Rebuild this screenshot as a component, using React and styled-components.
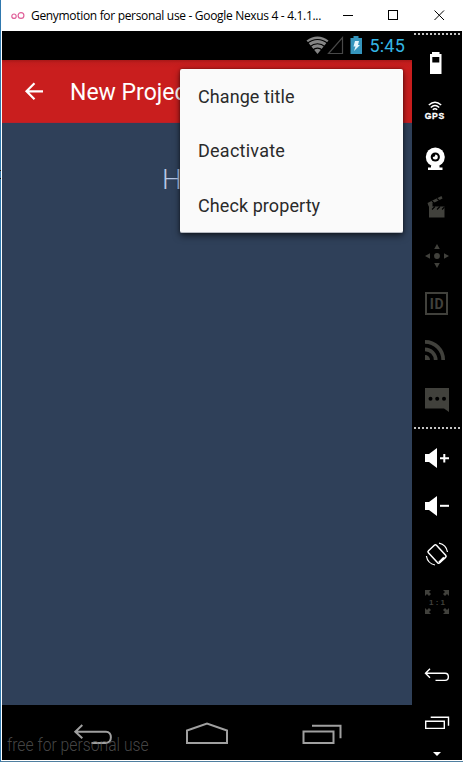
import React from "react";
import styled, { createGlobalStyle } from "styled-components";

const Global = createGlobalStyle`
  *, *::before, *::after { box-sizing: border-box; }
  body { margin: 0; background: #fff; overflow: hidden; }
  svg { display: block; flex: none; }
`;

const Window = styled.div`
  width: 463px;
  height: 762px;
  display: flex;
  flex-direction: column;
  background: #fff;
  border-left: 1px solid #2f78ae;
  border-bottom: 1px solid #4f7fa0;
  padding: 0 1px 1px 1px;
  position: relative;
`;

const EdgeMark = styled.i`
  position: absolute;
  left: -1px;
  top: ${(p) => p.$y}px;
  width: 1px;
  height: 1px;
  background: #111;
`;

const TitleBar = styled.header`
  height: 31px;
  flex: none;
  display: flex;
  align-items: center;
  padding-left: 9px;
`;

const WindowTitle = styled.span`
  font: 12px/16px "Open Sans", "Noto Sans", sans-serif;
  letter-spacing: -0.32px;
  color: #000;
  white-space: nowrap;
  width: 312px;
  margin-left: 6px;
`;

const Body = styled.div`
  display: flex;
  flex: 1;
  min-height: 0;
`;

const Phone = styled.main`
  width: 410px;
  display: flex;
  flex-direction: column;
  position: relative;
  background: #000;
  font-family: Roboto, sans-serif;
`;

const StatusBar = styled.div`
  height: 29px;
  display: flex;
  align-items: center;
  justify-content: flex-end;
  padding-right: 7px;
`;

const Clock = styled.span`
  font-size: 18px;
  line-height: 29px;
  color: #33b5e5;
  margin-left: 6px;
  letter-spacing: 0.2px;
`;

const AppBar = styled.div`
  height: 63px;
  display: flex;
  align-items: center;
  background: linear-gradient(#a81818 0, #c21d1d 3px, #c91e1e 8px);
  border-bottom: 1px solid #b9202a;
`;

const AppTitle = styled.h1`
  margin: 3px 0 0 23px;
  font-weight: 400;
  font-size: 23px;
  line-height: 28px;
  letter-spacing: 0;
  color: #fff;
`;

const Content = styled.section`
  height: 582px;
  background: #2f4059;
  padding: 41px 0 0 160px;
`;

const Greeting = styled.span`
  font-size: 28px;
  line-height: 32px;
  font-weight: 300;
  color: #b5c7e5;
`;

const NavBar = styled.nav`
  height: 55px;
  position: relative;
`;

const Watermark = styled.span`
  position: absolute;
  left: 5px;
  top: 29px;
  font-size: 18px;
  line-height: 22px;
  font-weight: 300;
  color: rgba(110, 110, 110, 0.65);
  white-space: nowrap;
  transform: scaleX(0.873);
  transform-origin: 0 50%;
`;

const Menu = styled.ul`
  position: absolute;
  left: 178px;
  top: 38px;
  width: 223px;
  height: 164px;
  margin: 0;
  padding: 0;
  list-style: none;
  display: grid;
  grid-template-rows: repeat(3, 1fr);
  background: #fafafa;
  border-radius: 2px;
  border-bottom: 1px solid #b5b9c1;
  box-shadow: 0 3px 7px rgba(0, 0, 0, 0.55), 0 0 3px rgba(0, 0, 0, 0.4);
`;

const MenuItem = styled.li`
  display: flex;
  align-items: center;
  padding: 1px 0 0 18px;
  font-size: 18px;
  letter-spacing: ${(p) => p.$spacing || 0}px;
  color: #2a2a2a;
`;

const Sidebar = styled.aside`
  width: 50px;
  background: #000;
  display: flex;
  flex-direction: column;
`;

const Dots = styled.div`
  height: 2px;
  flex: none;
  margin: ${(p) => p.$margin};
  background: repeating-linear-gradient(90deg, #c4c4c4 0 2px, #000 2px 4px);
`;

const ToolSvg = styled.svg`
  color: ${(p) => (p.$off ? "#41413c" : "#fff")};
  margin-top: ${(p) => p.$gap || 0}px;
`;

const Tool = ({ height = 48, ...props }) => (
  <ToolSvg width="50" height={height} viewBox={`0 0 50 ${height}`} fill="currentColor" {...props} />
);

const Speaker = () => <path d="M13 20h4l8-6v20l-8-6h-4z" />;

function TitleIcons() {
  return (
    <svg width="109" height="31" viewBox="0 0 109 31" fill="none" stroke="#000" shapeRendering="crispEdges">
      <path d="M0 15.5h10M45.5 10.5h9v9h-9z" />
      <path d="M91.500 10.500l9.500 9.500M101 10.500L91.500 20" shapeRendering="auto" />
    </svg>
  );
}

function StatusIcons() {
  return (
    <svg width="57" height="29" viewBox="0 0 57 29" fill="none">
      <path d="M0.5 9.5Q11.5 1.5 22.5 9.5L11.5 23z" fill="#858585" />
      <path d="M1 12.5Q11.5 4.5 22 12.5M3.5 16Q11.5 9.5 19.5 16M6.5 19.3Q11.5 15 16.5 19.3" stroke="#000" strokeWidth="1.2" />
      <path d="M22.5 22.5h14v-16z" stroke="#484848" strokeWidth="1.2" />
      <path d="M47.5 5h5v2H56v16H44.500V7h3z" fill="#3595bd" />
      <path d="M49 10h4l-1 4h2l-6 6 1.500-4.500h-2z" fill="#e4f5fc" />
    </svg>
  );
}

export default function App() {
  return (
    <>
      <Global />
      <Window>
        <EdgeMark $y={170} />
        <EdgeMark $y={178} />
        <TitleBar>
          <svg width="14" height="12" viewBox="0 0 14 12" fill="none" stroke="#e0619a" strokeWidth="1.200">
            <circle cx="3" cy="6.200" r="2.200" />
            <circle cx="10" cy="5.500" r="2.900" />
          </svg>
          <WindowTitle>Genymotion for personal use - Google Nexus 4 - 4.1.1...</WindowTitle>
          <TitleIcons />
        </TitleBar>
        <Body>
          <Phone>
            <StatusBar>
              <StatusIcons />
              <Clock>5:45</Clock>
            </StatusBar>
            <AppBar>
              <svg width="45" height="62" viewBox="0 0 45 62" fill="none" stroke="#fff" strokeWidth="2.200">
                <path d="M41 31.300H25M32.500 23.300l-8 8 8 8" />
              </svg>
              <AppTitle>New Project</AppTitle>
            </AppBar>
            <Content>
              <Greeting>H</Greeting>
            </Content>
            <NavBar>
              <svg width="410" height="55" viewBox="0 0 410 55" fill="none" stroke="#a0a0a0" strokeWidth="2">
                <path d="M80.300 20l-7 6.700 7 6.600M73.500 26.700h30.500c6.500 0 6.500 11.300 0 11.300H89.500" />
                <path d="M185 38V25.500L205 18.500l20 7V38z" />
                <path d="M301.500 26.500h30V38h-30zM310 20.700h28.500v12.600" />
              </svg>
              <Watermark>free for personal use</Watermark>
            </NavBar>
            <Menu>
              <MenuItem $spacing={0.08}>Change title</MenuItem>
              <MenuItem $spacing={0.25}>Deactivate</MenuItem>
              <MenuItem $spacing={0.08}>Check property</MenuItem>
            </Menu>
          </Phone>
          <Sidebar>
            <Dots $margin="2px 1px 3px 2px" />
            <Tool>
              <path fillRule="evenodd" d="M20 14h7.500v2H29.500v20H18V16h2zM20.300 19v5.500h7V19z" />
            </Tool>
            <Tool>
              <g fill="none" stroke="currentColor" strokeWidth="1.500">
                <path d="M16.800 19Q23 13.500 29.200 19M18.800 21.500Q23 17.500 27.200 21.500M20.800 23.800Q23 21.500 25.200 23.800" />
              </g>
              <text x="12.700" y="32.700" fontSize="8.600" fontWeight="700" fontFamily="Liberation Sans, sans-serif" stroke="currentColor" strokeWidth=".3" textLength="19.500">GPS</text>
            </Tool>
            <Tool>
              <circle cx="23.300" cy="23" r="9.500" />
              <circle cx="23.300" cy="23" r="4.600" fill="#000" />
              <path d="M23.300 20.500a2.500 2.500 0 1 1-2.500 2.500 2.500 2.500 0 0 0 2.500-2.500z" />
              <path d="M19 31.500h8.500v2H30.500V36H16v-2.500h3z" />
            </Tool>
            <Tool $off>
              <path d="M17 24.500h15.500V35.500H17z" />
              <path d="M15.500 21L29.500 14l1 2.500-14 7z" />
              <path d="M16 22h4.500v3H17z" />
              <path d="M20 27.500l3-3M25 27.500l3-3M30 27.500l2.500-2.500M20 19l3 3M25 16.500l3 2.500" stroke="#000" strokeWidth="1.100" />
            </Tool>
            <Tool $off>
              <circle cx="25" cy="26" r="2.900" />
              <path d="M25 14l2.800 5h-5.600zM25 38l2.800-5h-5.600zM13 26l5-2.800v5.600zM37 26l-5-2.800v5.600z" />
            </Tool>
            <Tool $off>
              <path fillRule="evenodd" d="M13 14h23v23H13zM15 16v19h19V16z" />
              <text x="17.700" y="31" fontSize="14" fontWeight="700" fontFamily="Roboto, sans-serif" textLength="14">ID</text>
            </Tool>
            <Tool $off>
              <g fill="none" stroke="currentColor" strokeWidth="3.700">
                <path d="M13 15.800A18.200 18.200 0 0 1 31.200 34M13 23.300A10.700 10.700 0 0 1 23.700 34" />
              </g>
              <path d="M13 29a5 5 0 0 1 5 5h-5z" />
            </Tool>
            <Tool $off>
              <path d="M13 14h24v24l-5-3.500H13z" />
              <g fill="#000">
                <circle cx="18.500" cy="24.700" r="2" />
                <circle cx="25.200" cy="24.700" r="2" />
                <circle cx="32" cy="24.700" r="2" />
              </g>
            </Tool>
            <Dots $margin="5px 1px 5px 2px" />
            <Tool>
              <Speaker />
              <path d="M28 23.200h3.300V20h2v3.200H37v2h-3.700v3.300h-2v-3.300H28z" />
            </Tool>
            <Tool>
              <Speaker />
              <path d="M28 22.800h9v2h-9z" />
            </Tool>
            <Tool>
              <g fill="none" stroke="currentColor">
                <rect x="19.500" y="15.800" width="11" height="16.500" rx="1.500" strokeWidth="1.500" transform="rotate(-43 25 24)" />
                <path d="M27 32.500l5-5" strokeWidth="2" />
                <path d="M27 13.100A11 11 0 0 1 35.500 22M23 35A11 11 0 0 1 14.400 26" strokeWidth="1.200" />
              </g>
            </Tool>
            <Tool $off>
              <path d="M13 12h6l-2 2 2 2-2 2-2-2-2 2zM37 12h-6l2 2-2 2 2 2 2-2 2 2zM13 36h6l-2-2 2-2-2-2-2 2-2-2zM37 36h-6l2-2-2-2 2-2 2 2 2-2z" />
              <text x="17" y="27.200" fontSize="8" fontWeight="700" fontFamily="Liberation Sans, sans-serif" textLength="16">1:1</text>
            </Tool>
            <Tool $gap={25}>
              <path d="M18 17.700l-4.500 4.500 4.500 4.500M13.500 22.200H33c4.500 0 4.500 7.200 0 7.200h-9.500" fill="none" stroke="currentColor" strokeWidth="1.400" />
            </Tool>
            <Tool>
              <path d="M13.700 22.200h18.600v7.200H13.700zM18.700 18.300h17.800v8.500" fill="none" stroke="currentColor" strokeWidth="1.400" />
            </Tool>
            <Tool height={13}>
              <path d="M21 5h8l-4 4z" />
            </Tool>
          </Sidebar>
        </Body>
      </Window>
    </>
  );
}
